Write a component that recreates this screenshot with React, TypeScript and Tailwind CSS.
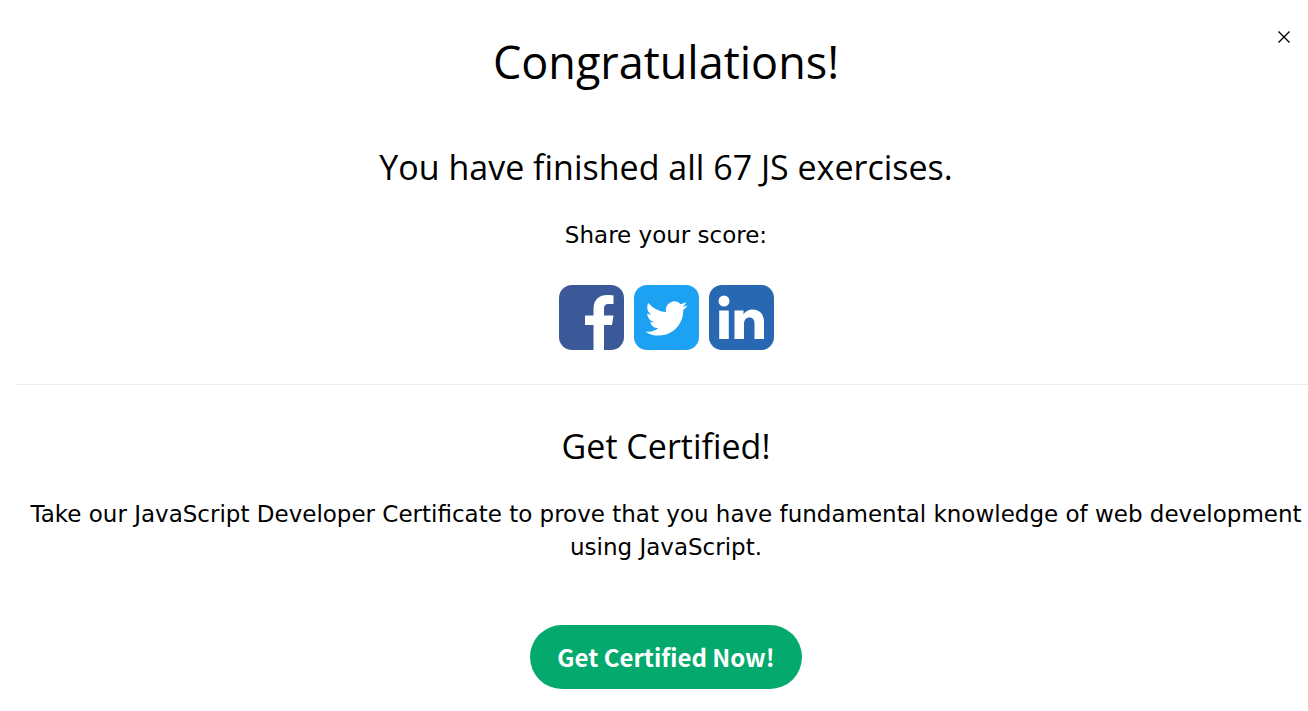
export default function App() {
  return (
    <main className="relative bg-white pl-[15px] font-['Open_Sans',sans-serif] text-black">
      <button type="button" aria-label="Close" className="absolute top-[25px] right-3 flex size-6 items-center justify-center">
        <svg viewBox="0 0 12 12" className="size-3" stroke="#000" strokeWidth="1.4" aria-hidden="true">
          <path d="M.5 .5 11.5 11.5M11.5 .5 .5 11.5" />
        </svg>
      </button>
      <section className="flex flex-col items-center border-b border-[#eeeeee] pt-[26px] pb-[34px] pl-[9px] text-center">
        <h1 className="text-[45px] leading-[72px]">Congratulations!</h1>
        <h2 className="mt-[42px] text-[34px] leading-[54px]">You have finished all 67 JS exercises.</h2>
        <p className="mt-6 font-['DejaVu_Sans',sans-serif] text-[23px] leading-[34px]">Share your score:</p>
        <div className="mt-[33px] flex gap-[10px]">
          <a href="#facebook" aria-label="Facebook">
            <svg viewBox="0 0 65 65" className="size-[65px]" aria-hidden="true">
              <rect width="65" height="65" rx="13" fill="#3b5998" />
              <path d="M34.500 65V40H26V30.500H34.500V24C34.500 14.500 40 10 48.500 10C51 10 53.500 10.200 54.500 10.500V19H50C46 19 45 21 45 24V30.500H54.500L53 40H45V65Z" fill="#fff" />
            </svg>
          </a>
          <a href="#twitter" aria-label="Twitter">
            <svg viewBox="0 0 65 65" className="size-[65px]" aria-hidden="true">
              <rect width="65" height="65" rx="13" fill="#1da1f2" />
              <path transform="translate(11.5 12.5) scale(1.75)" fill="#fff" d="M23.953 4.57a10 10 0 01-2.825.775 4.958 4.958 0 002.163-2.723c-.951.555-2.005.959-3.127 1.184a4.92 4.92 0 00-8.384 4.482C7.69 8.095 4.067 6.13 1.64 3.162a4.822 4.822 0 00-.666 2.475c0 1.71.87 3.213 2.188 4.096a4.904 4.904 0 01-2.228-.616v.06a4.923 4.923 0 003.946 4.827 4.996 4.996 0 01-2.212.085 4.936 4.936 0 004.604 3.417 9.867 9.867 0 01-6.102 2.105c-.39 0-.779-.023-1.17-.067a13.995 13.995 0 007.557 2.209c9.053 0 13.998-7.496 13.998-13.985 0-.21 0-.42-.015-.63A9.935 9.935 0 0024 4.59z" />
            </svg>
          </a>
          <a href="#linkedin" aria-label="LinkedIn">
            <svg viewBox="0 0 65 65" className="size-[65px]" aria-hidden="true">
              <rect width="65" height="65" rx="13" fill="#2867b2" />
              <g fill="#fff">
                <circle cx="15" cy="16" r="5.500" />
                <path d="M10.200 25.500H19.800V54H10.200ZM25.500 25.500H34.500V29.500C36 26.500 39.500 24.500 43.500 24.500C51 24.500 55 29.500 55 37V54H45.500V39C45.500 35 44 32.500 40.500 32.500C37 32.500 35 35 35 39V54H25.500Z" />
              </g>
            </svg>
          </a>
        </div>
      </section>
      <section className="flex flex-col items-center pt-[34px] pb-[22px] pl-[9px] text-center">
        <h2 className="text-[34px] leading-[54px]">Get Certified!</h2>
        <p className="mt-[25px] font-['DejaVu_Sans',sans-serif] text-[23px] leading-[33px]">Take our JavaScript Developer Certificate to prove that you have fundamental knowledge of web development using JavaScript.</p>
        <a href="#certificate" className="mt-[61px] flex h-16 items-center rounded-full bg-[#04aa6d] px-[27px] font-['Noto_Sans_CJK_SC',sans-serif] text-[24px] font-bold text-white">Get Certified Now!</a>
      </section>
    </main>
  );
}
